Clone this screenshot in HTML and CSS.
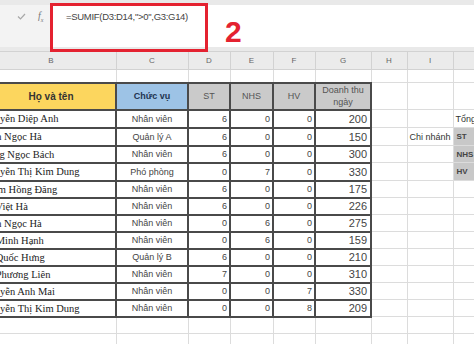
FILE: index.html
```html
<!DOCTYPE html>
<html lang="vi">
<head>
    <meta charset="UTF-8">
    <meta name="viewport" content="width=device-width, initial-scale=1.0">
    <title>SUMIF - Excel</title>
    <link rel="stylesheet" href="styles.css">
</head>
<body>
    <div class="excel">
        <div class="formula-bar">
            <div class="fx-tools">
                <svg class="check" width="9" height="7" viewBox="0 0 9 7">
                    <polyline points="1,3.5 3.5,6 8,1" fill="none" stroke="#a8a8a8" stroke-width="1.2"/>
                </svg>
                <span class="fx">f<sub>x</sub></span>
            </div>
            <div class="formula-input">=SUMIF(D3:D14,"&gt;0",G3:G14)</div>
        </div>

        <div class="sheet">
            <table class="grid">
                <colgroup>
                    <col style="width:130px">
                    <col style="width:72px">
                    <col style="width:42px">
                    <col style="width:43px">
                    <col style="width:42px">
                    <col style="width:56px">
                    <col style="width:36px">
                    <col style="width:46px">
                    <col style="width:60px">
                </colgroup>
                <tr class="letters">
                    <th>B</th><th>C</th><th>D</th><th>E</th><th>F</th><th>G</th><th>H</th><th>I</th><th>J</th>
                </tr>
                <tr class="r-blank"><td></td><td></td><td></td><td></td><td></td><td></td><td></td><td></td><td></td></tr>
                <tr class="r-head">
                    <td class="t h-name">Họ và tên</td>
                    <td class="t h-role">Chức vụ</td>
                    <td class="t h-grey">ST</td>
                    <td class="t h-grey">NHS</td>
                    <td class="t h-grey">HV</td>
                    <td class="t h-grey h-two">Doanh thu<br>ngày</td>
                    <td></td><td></td><td></td>
                </tr>
                <tr class="r18">
                    <td class="t name">Nguyễn Diệp Anh</td><td class="t role">Nhân viên</td>
                    <td class="t num">6</td><td class="t num">0</td><td class="t num">0</td><td class="t rev">200</td>
                    <td></td><td></td><td class="side">Tổng</td>
                </tr>
                <tr class="r18">
                    <td class="t name">Trần Ngọc Hà</td><td class="t role">Quản lý A</td>
                    <td class="t num">6</td><td class="t num">0</td><td class="t num">0</td><td class="t rev">150</td>
                    <td></td><td class="side">Chi nhánh</td><td class="side-key">ST</td>
                </tr>
                <tr class="r17">
                    <td class="t name">Đặng Ngọc Bách</td><td class="t role">Nhân viên</td>
                    <td class="t num">6</td><td class="t num">0</td><td class="t num">0</td><td class="t rev">300</td>
                    <td></td><td></td><td class="side-key">NHS</td>
                </tr>
                <tr class="r18">
                    <td class="t name">Nguyễn Thị Kim Dung</td><td class="t role">Phó phòng</td>
                    <td class="t num">0</td><td class="t num">7</td><td class="t num">0</td><td class="t rev">330</td>
                    <td></td><td></td><td class="side-key">HV</td>
                </tr>
                <tr class="r17">
                    <td class="t name">Phạm Hồng Đăng</td><td class="t role">Nhân viên</td>
                    <td class="t num">6</td><td class="t num">0</td><td class="t num">0</td><td class="t rev">175</td>
                    <td></td><td></td><td></td>
                </tr>
                <tr class="r17">
                    <td class="t name">Lê Việt Hà</td><td class="t role">Nhân viên</td>
                    <td class="t num">6</td><td class="t num">0</td><td class="t num">0</td><td class="t rev">226</td>
                    <td></td><td></td><td></td>
                </tr>
                <tr class="r17">
                    <td class="t name">Trần Ngọc Hà</td><td class="t role">Nhân viên</td>
                    <td class="t num">0</td><td class="t num">6</td><td class="t num">0</td><td class="t rev">275</td>
                    <td></td><td></td><td></td>
                </tr>
                <tr class="r17">
                    <td class="t name">Lê Minh Hạnh</td><td class="t role">Nhân viên</td>
                    <td class="t num">0</td><td class="t num">6</td><td class="t num">0</td><td class="t rev">159</td>
                    <td></td><td></td><td></td>
                </tr>
                <tr class="r17">
                    <td class="t name">Lê Quốc Hưng</td><td class="t role">Quản lý B</td>
                    <td class="t num">6</td><td class="t num">0</td><td class="t num">0</td><td class="t rev">210</td>
                    <td></td><td></td><td></td>
                </tr>
                <tr class="r17">
                    <td class="t name">Lê Phương Liên</td><td class="t role">Nhân viên</td>
                    <td class="t num">7</td><td class="t num">0</td><td class="t num">0</td><td class="t rev">310</td>
                    <td></td><td></td><td></td>
                </tr>
                <tr class="r17">
                    <td class="t name">Nguyễn Anh Mai</td><td class="t role">Nhân viên</td>
                    <td class="t num">0</td><td class="t num">0</td><td class="t num">7</td><td class="t rev">330</td>
                    <td></td><td></td><td></td>
                </tr>
                <tr class="r17">
                    <td class="t name">Nguyễn Thị Kim Dung</td><td class="t role">Nhân viên</td>
                    <td class="t num">0</td><td class="t num">0</td><td class="t num">8</td><td class="t rev">209</td>
                    <td></td><td></td><td></td>
                </tr>
                <tr class="r17"><td></td><td></td><td></td><td></td><td></td><td></td><td></td><td></td><td></td></tr>
                <tr class="r17"><td></td><td></td><td></td><td></td><td></td><td></td><td></td><td></td><td></td></tr>
            </table>
        </div>

        <!-- annotation over the formula -->
        <div class="callout-box"></div>
        <div class="callout-num">2</div>
    </div>
</body>
</html>
```

FILE: styles.css
```css
body {
    margin: 0;
    background: #ffffff;
    font-family: "Liberation Sans", Arial, sans-serif;
    color: #444;
}

.excel {
    position: relative;
    width: 474px;
    height: 344px;
    overflow: hidden;
}

/* formula bar */
.formula-bar {
    display: flex;
    height: 51px;
    padding-top: 5px;
    padding-bottom: 4px;
    box-sizing: border-box;
    background: #e9e9e9;
}

.fx-tools {
    width: 50px;
    display: flex;
    align-items: flex-start;
    gap: 12px;
    padding: 5px 0 0 17px;
    box-sizing: border-box;
    background: #f3f3f3;
}

.check {
    margin-top: 3px;
}

.fx {
    font-family: "Liberation Serif", serif;
    font-style: italic;
    font-size: 10px;
    color: #777;
}

.fx sub {
    font-size: 6px;
}

.formula-input {
    flex: 1;
    background: #ffffff;
    padding: 6px 0 0 16px;
    font-size: 9.5px;
    letter-spacing: -0.3px;
    color: #444;
}

/* sheet grid */
.sheet {
    overflow: hidden;
}

.grid {
    margin-left: -15px;
    border-collapse: collapse;
    table-layout: fixed;
    width: 527px;
}

.grid td,
.grid th {
    padding: 0;
    border: 1px solid #dcdcdc;
    white-space: nowrap;
    overflow: hidden;
    font-size: 9px;
}

.letters {
    height: 18px;
    background: #ebebeb;
}

.letters th {
    font-weight: normal;
    font-size: 8px;
    color: #666;
    border-color: #d2d2d2;
}

.r-blank { height: 13px; }
.r-head { height: 27px; }
.r18 { height: 18px; }
.r17 { height: 17px; }

.grid .t {
    border: 2px solid #4a4a4a;
}

.h-name {
    background: #fcd65e;
    text-align: center;
    font-weight: bold;
    font-size: 10px !important;
    color: #333;
}

.h-role {
    background: #9dc3e6;
    text-align: center;
    font-weight: bold;
    color: #1f3450;
}

.h-grey {
    background: #cacaca;
    text-align: center;
    color: #555;
}

.h-two {
    line-height: 12px;
}

.name {
    font-family: "Liberation Serif", serif;
    font-size: 10.5px !important;
    color: #222;
    text-indent: -5px;
}

.role {
    text-align: center;
    color: #444;
}

.num {
    text-align: right;
    padding-right: 2px !important;
    color: #444;
}

.rev {
    text-align: right;
    padding-right: 3px !important;
    font-size: 11px !important;
    color: #444;
}

.side {
    padding-left: 2px !important;
    color: #333;
}

.side-key {
    background: #c8c8c8;
    font-weight: bold;
    font-size: 8px !important;
    padding-left: 3px !important;
    color: #444;
}

/* red annotation */
.callout-box {
    position: absolute;
    left: 50px;
    top: 3px;
    width: 158px;
    height: 49px;
    border: 3px solid #e42230;
    box-sizing: border-box;
}

.callout-num {
    position: absolute;
    left: 225px;
    top: 15px;
    font-size: 30px;
    font-weight: bold;
    color: #e42230;
}
```
